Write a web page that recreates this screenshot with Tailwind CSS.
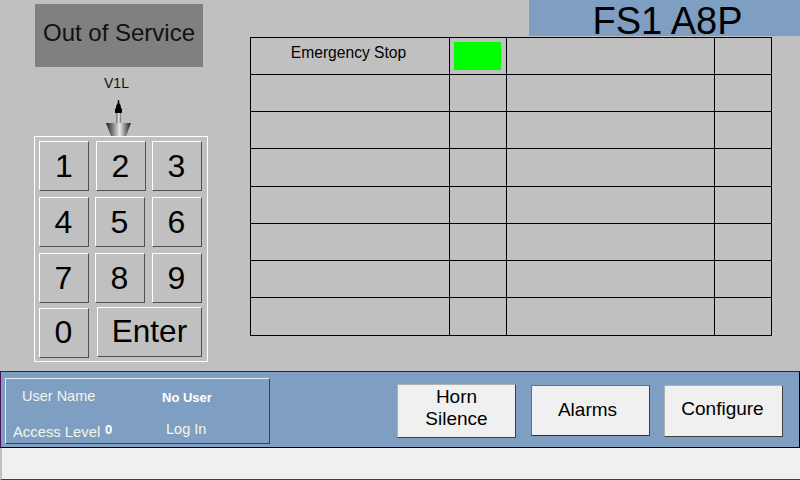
<!DOCTYPE html>
<html lang="en">
<head>
<meta charset="UTF-8" />
<title>FS1 A8P</title>
<script src="https://cdn.jsdelivr.net/npm/@tailwindcss/browser@4"></script>
</head>
<body class="w-[800px] h-[480px] overflow-hidden bg-[#c0c0c0] text-black font-['Liberation_Sans',Arial,sans-serif]">
<div class="flex h-[371px]">
  <!-- left: state, valve, keypad -->
  <div class="w-[250px] pt-[4px] pl-[34px]">
    <div class="ml-[1px] w-[168px] h-[63px] bg-[#808080] flex items-center justify-center text-[24px] leading-none pb-[6px] text-[#111]">Out of Service</div>
    <div class="w-[165px] text-center text-[14px] leading-[16px] mt-[8px] text-[#111]">V1L</div>
    <div class="h-[36px] mt-[9px] ml-[72px]">
      <svg width="26" height="36" viewBox="0 0 26 36">
        <defs>
          <linearGradient id="shaft" x1="0" x2="1" y1="0" y2="0">
            <stop offset="0" stop-color="#555"/><stop offset=".5" stop-color="#f2f2f2"/><stop offset="1" stop-color="#666"/>
          </linearGradient>
          <linearGradient id="cone" x1="0" x2="1" y1="0" y2="0">
            <stop offset="0" stop-color="#1c1c1c"/><stop offset=".55" stop-color="#e8e8e8"/><stop offset="1" stop-color="#1c1c1c"/>
          </linearGradient>
        </defs>
        <path d="M12 0h1l.6 4 1 1 .4 3 1 1v4h-7v-4l1-1 .4-3 1-1z" fill="#000"/>
        <rect x="10.500" y="13" width="4.500" height="10" fill="url(#shaft)"/>
        <path d="M0 23h25l-5 13h-15z" fill="url(#cone)"/>
      </svg>
    </div>
    <div class="w-[174px] h-[226px] border border-white">
      <div class="grid grid-cols-[56px_57px_50px] gap-y-[6px] pl-[4px] pt-[4px]">
        <button class="w-[50px] h-[50px] border border-white border-r-[#505050] border-b-[#505050] text-[32px] leading-none">1</button>
        <button class="w-[50px] h-[50px] ml-[1px] pr-[1px] border border-white border-r-[#505050] border-b-[#505050] text-[32px] leading-none">2</button>
        <button class="w-[50px] h-[50px] pr-[1px] border border-white border-r-[#505050] border-b-[#505050] text-[32px] leading-none">3</button>
        <button class="w-[50px] h-[50px] pr-[1px] border border-white border-r-[#505050] border-b-[#505050] text-[32px] leading-none">4</button>
        <button class="w-[50px] h-[50px] pr-[1px] border border-white border-r-[#505050] border-b-[#505050] text-[32px] leading-none">5</button>
        <button class="w-[50px] h-[50px] pr-[1px] border border-white border-r-[#505050] border-b-[#505050] text-[32px] leading-none">6</button>
        <button class="w-[50px] h-[50px] pr-[1px] border border-white border-r-[#505050] border-b-[#505050] text-[32px] leading-none">7</button>
        <button class="w-[50px] h-[50px] pr-[1px] border border-white border-r-[#505050] border-b-[#505050] text-[32px] leading-none">8</button>
        <button class="w-[50px] h-[50px] pr-[1px] border border-white border-r-[#505050] border-b-[#505050] text-[32px] leading-none">9</button>
      </div>
      <div class="flex items-start pl-[4px] mt-[4px]">
        <button class="w-[50px] h-[50px] mt-[1px] pb-[3px] pr-[1px] border border-white border-r-[#505050] border-b-[#505050] text-[32px] leading-none">0</button>
        <button class="w-[105px] h-[50px] ml-[8px] border border-white border-r-[#505050] border-b-[#505050] text-[31.500px] leading-none">Enter</button>
      </div>
    </div>
  </div>
  <!-- right: title and alarm table -->
  <div class="w-[550px] flex flex-col">
    <div class="self-end w-[271px] h-[36px] bg-[#7f9fc2] text-[38px] leading-[42px] text-center pl-[6px]">FS1 A8P</div>
    <div class="mt-[1px] w-[522px] border-t border-l border-black grid grid-cols-[199px_57px_208px_57px] grid-rows-[37px_37px_37px_38px_37px_37px_37px_38px] [&>div]:border-r [&>div]:border-b [&>div]:border-black">
      <div class="text-[15.600px] leading-[29px] text-center pr-[3px]">Emergency Stop</div>
      <div class="pl-[4px] pt-[4px]"><div class="w-[47px] h-[28px] bg-[#00ff00]"></div></div>
      <div></div><div></div>
      <div></div><div></div><div></div><div></div>
      <div></div><div></div><div></div><div></div>
      <div></div><div></div><div></div><div></div>
      <div></div><div></div><div></div><div></div>
      <div></div><div></div><div></div><div></div>
      <div></div><div></div><div></div><div></div>
      <div></div><div></div><div></div><div></div>
    </div>
  </div>
</div>
<!-- bottom panel -->
<div class="h-[77px] bg-[#7f9fc2] border-t border-t-[#4b0f5a] border-b border-b-black border-r border-r-black border-l border-l-[#4b0f5a] flex">
  <div class="ml-[4px] mt-[6px] w-[265px] h-[66px] border border-[#e8eef5] border-r-[#404040] border-b-[#404040] text-[#f5f5e8] relative text-[14.500px] leading-[18px]">
    <div class="absolute left-[16px] top-[8px]">User Name</div>
    <div class="absolute left-[156px] top-[10px] text-[13px] font-bold text-white">No User</div>
    <div class="absolute left-[7px] top-[44px] text-[14.800px]">Access Level</div>
    <div class="absolute left-[99px] top-[42px] text-[13px] font-bold text-white">0</div>
    <div class="absolute left-[160px] top-[41px]">Log In</div>
  </div>
  <div class="ml-[127px] mt-[12px] w-[119px] h-[54px] pb-[6px] bg-[#f0f0f0] border border-[#b0b0b0] border-r-[#404040] border-b-[#404040] text-[19px] leading-[22px] flex items-center justify-center text-center">Horn<br />Silence</div>
  <div class="ml-[15px] mt-[13px] w-[119px] h-[51px] pr-[6px] bg-[#f0f0f0] border border-[#607080] border-r-[#404040] border-b-[#303030] text-[19px] flex items-center justify-center">Alarms</div>
  <div class="ml-[14px] mt-[13px] w-[119px] h-[52px] pr-[2px] pb-[4px] bg-[#f0f0f0] border border-[#b0b0b0] border-r-[#404040] border-b-[#404040] text-[19px] flex items-center justify-center">Configure</div>
</div>
<div class="h-[32px] bg-[#f0f0f0] border-l-2 border-l-[#c0c0c0] border-b border-b-[#404040]"></div>
</body>
</html>
